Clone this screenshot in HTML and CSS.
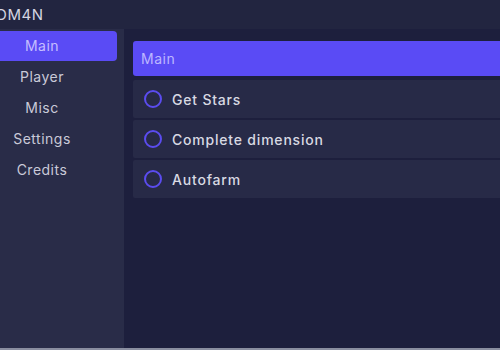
FILE: index.html
```html
<!DOCTYPE html>
<html lang="en">
<head>
  <meta charset="UTF-8" />
  <title>DM4N</title>
  <link rel="stylesheet" href="styles.css">
</head>
<body>
  <div class="window">
    <div class="titlebar">DM4N</div>
    <div class="content">
      <div class="sidebar">
        <div class="tab active">Main</div>
        <div class="tab">Player</div>
        <div class="tab">Misc</div>
        <div class="tab">Settings</div>
        <div class="tab">Credits</div>
      </div>
      <div class="page">
        <div class="section">Main</div>
        <div class="toggle"><span class="ring"></span>Get Stars</div>
        <div class="toggle"><span class="ring"></span>Complete dimension</div>
        <div class="toggle"><span class="ring"></span>Autofarm</div>
      </div>
    </div>
    <div class="taskbar"></div>
  </div>
</body>
</html>
```

FILE: styles.css
```css
body {
  margin: 0;
  font-family: Inter, 'Noto Sans', sans-serif;
  background: #1d1f3d;
  overflow: hidden;
}
.window {
  width: 500px;
  height: 350px;
  display: flex;
  flex-direction: column;
}
.titlebar {
  height: 29px;
  line-height: 29px;
  background: #222540;
  color: #d4d5e2;
  font-size: 15px;
  margin-left: -4px;
  letter-spacing: 0.6px;
}
.content {
  flex: 1;
  display: flex;
}
.sidebar {
  width: 124px;
  background: #292c48;
  padding-top: 2px;
  display: flex;
  flex-direction: column;
  gap: 1px;
}
.tab {
  height: 30px;
  line-height: 30px;
  text-align: center;
  color: #c9cad8;
  font-size: 14px;
  letter-spacing: 0.5px;
  padding-right: 40px;
}
.tab.active {
  background: #5a4bf5;
  color: #c4beff;
  border-radius: 0 4px 4px 0;
  margin-right: 7px;
  padding-right: 33px;
}
.page {
  flex: 1;
  padding: 12px 0 0 9px;
  display: flex;
  flex-direction: column;
  gap: 2px;
}
.section {
  height: 35px;
  line-height: 35px;
  background: #5a4bf5;
  color: #bcb6ff;
  font-size: 14px;
  letter-spacing: 0.5px;
  padding-left: 8px;
  border-radius: 3px 0 0 3px;
  margin-bottom: 2px;
}
.toggle {
  height: 38px;
  background: #272a47;
  border-radius: 2px 0 0 2px;
  display: flex;
  align-items: center;
  padding-left: 11px;
  color: #d8d9e3;
  font-size: 14px;
  font-weight: 500;
  letter-spacing: 0.8px;
}
.ring {
  width: 14px;
  height: 14px;
  border: 2px solid #5b4cf0;
  border-radius: 50%;
  margin-right: 10px;
}
.taskbar {
  height: 2px;
  background: #8a8ea0;
}
```
